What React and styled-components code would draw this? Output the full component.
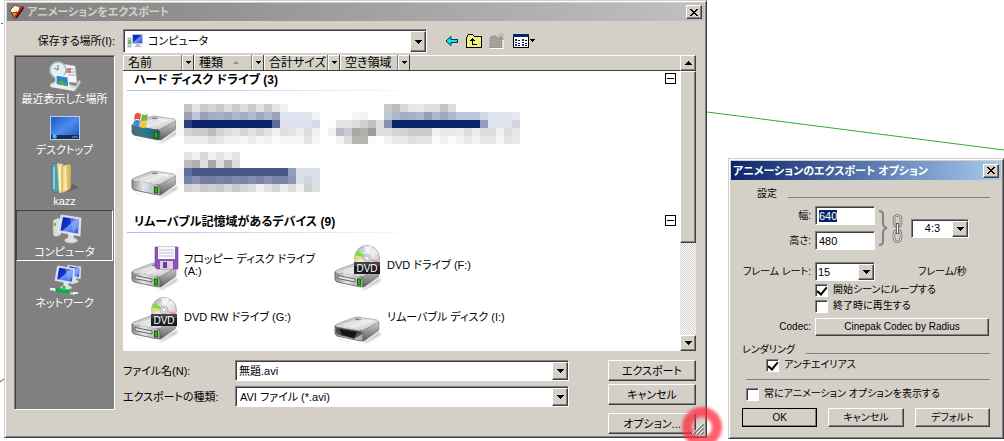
import React, { useEffect, useRef } from "react";
import styled, { createGlobalStyle, css } from "styled-components";

const GlobalStyle = createGlobalStyle`
    * {
        box-sizing: border-box;
    }
    body {
        margin: 0;
        background-color: #fff;
        overflow: hidden;
    }
    body, button, input, select {
        font-family: "Liberation Sans", "Noto Sans CJK JP", sans-serif;
        font-size: 11px;
        line-height: 14px;
        font-feature-settings: "palt";
        color: #000;
    }
    ::selection {
        background-color: #0a246a;
        color: #fff;
    }
`;

const raised = css`
    border: 1px solid;
    border-color: #fff #404040 #404040 #fff;
    box-shadow: inset -1px -1px 0 #808080;
    background-color: #d4d0c8;
`;

const sunken = css`
    border: 1px solid;
    border-color: #808080 #fff #fff #808080;
    box-shadow: inset 1px 1px 0 #404040;
    background-color: #fff;
`;

/* ---------- censored tiles ---------- */

const grey = (list) =>
    list.split(" ").map((c) => {
        if (c === "_") return null;
        return c.length === 2 ? `#${c}${c}${c}` : `#${c}`;
    });

const rep = (c, n) => Array(n).fill(c).join(" ");

const MOSAIC_C = [
    "_ c4 e4 ca d4 c8 dc cc dc ca e2 cc e4 f0",
    `_ 9a9fb2 c0c6dc 9a9fb4 a4abc4 a8afc8 9fa6c0 b0b6ca a4abc4 b4bacc a0a7be b0b8cc 9ca4bc ${rep("dfe3ef", 4)} f3f4f8`,
    `f7 2a3e80 ${rep("0a246a", 10)} 5a6c9e ${rep("dfe2ee", 4)} d6daea`,
    "f7 d2 cc cc bc d2 dc e4 d6 e2 d6 e2 f0 e0 e4 ee dc f0",
    "_ ec eb eb e0 e6 f0 f0 f5 ec f5 f0 fa f5 f5 f5 e4 f5",
];

const MOSAIC_D = [
    "_ e4 f0 d8 f0 e4 f0 e4",
    "_ bc b0 e0 a8 dc b0 dc",
    `f7 5f6e9e ${rep("465889", 12)} 92a0c0 ${rep("dce0ec", 3)}`,
    "f7 7482a8 8890ae 7480a8 707ca4 7884aa 7480a8 8088aa 7884aa 8490b0 7884aa 8890ae 7884aa 7884aa 8c96b4 dce0ea d2d6e0 dce0ea",
    "_ d0 d8 c8 d0 c8 d8 c8 d6 dc f0 e2 d4 ec dc f0 d0 e0",
];

const MOSAIC_E = [
    "_ _ _ _ _ _ _ c8 bc d8 e6 e8 e0 e0 c4 dc",
    `_ _ _ f6 f4 _ _ c2c8d0 b0b6cc a6acc4 a8aec6 b0b6ce 959cb4 b0b8d0 a0a8be b0b6cc ${rep("c0c6dc", 3)} d4d8e6 ${rep("dfe3ee", 3)} e6e8f0`,
    `fc e6e4e6 e6e4e6 dc ccd0d0 c0 de 8490b6 ${rep("0a246a", 11)} 929cc0 ${rep("dfe3ee", 3)} d2d5e4`,
    "f0 bcbcc8 c8cad6 a6aca4 b0 9c e0 e0 d4 d2 ca cc ca f0 e8 e8 ec dc ec dc dc f0 dc e6",
    "_ f4 dc b0b8b0 b4 fa _ f4 ea ea e0 e4 e4 fa f0 fa f4 e8 f4 e6 e6 f6 e4 ea",
];

const Mosaic = ({ rows, cols, top }) => (
    <svg width={cols * 8} height="52" shapeRendering="crispEdges" aria-hidden="true">
        {rows.map((row, y) =>
            grey(row).map(
                (fill, x) =>
                    fill && (
                        <rect key={`${x}-${y}`} x={x * 8} y={top + y * 8} width="8" height="8" fill={fill} />
                    )
            )
        )}
    </svg>
);

/* ---------- icons ---------- */

const Gradients = () => (
    <HiddenSvg aria-hidden="true">
        <defs>
            <linearGradient id="metalTop" x1="0" y1="0" x2="1" y2="1">
                <stop offset="0" stopColor="#a0a0a0" />
                <stop offset="0.5" stopColor="#ececec" />
                <stop offset="1" stopColor="#b0b0b0" />
            </linearGradient>
            <linearGradient id="metalSide" x1="0" y1="0" x2="0" y2="1">
                <stop offset="0" stopColor="#cecece" />
                <stop offset="1" stopColor="#5c5c5c" />
            </linearGradient>
            <linearGradient id="metalFront" x1="0" y1="0" x2="1" y2="0">
                <stop offset="0" stopColor="#8c8c8c" />
                <stop offset="0.4" stopColor="#e6e6ee" />
                <stop offset="1" stopColor="#a4a4a4" />
            </linearGradient>
            <linearGradient id="tealFront" x1="0" y1="0" x2="1" y2="0">
                <stop offset="0" stopColor="#4a6c80" />
                <stop offset="0.5" stopColor="#257c8c" />
                <stop offset="1" stopColor="#2b5a66" />
            </linearGradient>
            <linearGradient id="screen" x1="0" y1="0" x2="1" y2="1">
                <stop offset="0" stopColor="#0a22a8" />
                <stop offset="0.45" stopColor="#1434d0" />
                <stop offset="0.5" stopColor="#6c98f4" />
                <stop offset="1" stopColor="#2450dc" />
            </linearGradient>
            <linearGradient id="desk" x1="0" y1="0" x2="1" y2="1">
                <stop offset="0" stopColor="#1c58c8" />
                <stop offset="0.5" stopColor="#4c8cf0" />
                <stop offset="1" stopColor="#1850c0" />
            </linearGradient>
            <linearGradient id="disc" x1="0" y1="0" x2="1" y2="1">
                <stop offset="0" stopColor="#a8a8a8" />
                <stop offset="0.5" stopColor="#f0f0f0" />
                <stop offset="1" stopColor="#b4b4b4" />
            </linearGradient>
            <linearGradient id="folder" x1="0" y1="0" x2="1" y2="0">
                <stop offset="0" stopColor="#e8cc70" />
                <stop offset="0.5" stopColor="#fcf0b0" />
                <stop offset="1" stopColor="#d4ac48" />
            </linearGradient>
            <filter id="soft" x="-50%" y="-50%" width="200%" height="200%">
                <feGaussianBlur stdDeviation="1.6" />
            </filter>
            <filter id="shade" x="-20%" y="-50%" width="140%" height="200%">
                <feGaussianBlur stdDeviation="1" />
            </filter>
        </defs>
    </HiddenSvg>
);

const DriveBody = ({ y, kind }) => (
    <g transform={`translate(0 ${y})`}>
        <path d="M4 22 L28 27 L46 15 L46 18 L30 27 L6 23Z" fill="#666" opacity="0.5" filter="url(#shade)" />
        <path d="M1 9 Q1 8 3 7 L19 1 Q21 0 23 0 L43 3 Q45 4 45 6 L28 15Z" fill="url(#metalTop)" stroke="#8c8c8c" strokeWidth="0.6" />
        <path d="M28 14 L45 5 L45 12 Q45 13 44 14 L30 24 L28 24Z" fill="url(#metalSide)" stroke="#6c6c6c" strokeWidth="0.5" />
        <path
            d="M1 9 L26 13 Q29 14 29 17 L29 22 Q29 24 27 24 L3 19 Q1 18 1 16Z"
            fill={kind === "windows" ? "url(#tealFront)" : "url(#metalFront)"}
            stroke="#5c5c5c"
            strokeWidth="0.8"
        />
        <path d="M2 9 L26 13" stroke="#fff" strokeWidth="0.8" />
        <ellipse cx="24" cy="2.4" rx="3" ry="1" fill="#777" />
        <path d="M10 8 L25 3 L37 5" stroke="#fff" strokeWidth="0.8" fill="none" opacity="0.8" />
        {kind === "removable" ? (
            <g>
                <path d="M2 10 L26 14 Q28 15 28 17 L20 22 L5 18 Q2 17 2 14Z" fill="#505050" />
                <path d="M5 12 L23 15 L20 21 L8 18Z" fill="#141414" />
            </g>
        ) : (
            <rect x="23.5" y="16" width="3.2" height="6" fill="#18c400" stroke="#104c00" strokeWidth="0.8" />
        )}
        {(kind === "dvd" || kind === "floppy") && (
            <path d="M4 12.5 L21 16 L21 19 L4 15.5Z" fill="#e8e8e8" stroke="#555" strokeWidth="0.9" />
        )}
    </g>
);

const Flag = ({ x, y, s }) => (
    <g transform={`translate(${x} ${y}) scale(${s})`}>
        <path d="M2 1 Q5 -1 8 1 L7 7 Q4 5 1 7Z" fill="#e8582c" />
        <path d="M9 1 Q12 3 15 1 L14 7 Q11 9 8 7Z" fill="#74b83c" />
        <path d="M1 8 Q4 6 7 8 L6 14 Q3 12 0 14Z" fill="#3c8ce0" />
        <path d="M8 8 Q11 10 14 8 L13 14 Q10 16 7 14Z" fill="#fcc42c" />
    </g>
);

const bodyTop = { windows: 15, disk: 18, floppy: 20, dvd: 20, removable: 22 };

const DriveIcon = ({ kind }) => (
    <svg width="48" height="48" viewBox="0 0 48 48" aria-hidden="true">
        {kind === "dvd" && (
            <g>
                <circle cx="33" cy="15" r="12.5" fill="url(#disc)" stroke="#8c8c8c" strokeWidth="0.6" />
                <path d="M33 15 L21 12 L24 8Z" fill="#6ce428" />
                <path d="M33 15 L20 17 L21 13Z" fill="#f0dc54" opacity="0.8" />
                <path d="M33 15 L45 18 L44 21Z" fill="#f08cc0" />
                <path d="M33 15 L30 3 L38 3Z" fill="#fff" opacity="0.7" />
                <circle cx="33" cy="15" r="4" fill="#dcdcdc" stroke="#aaa" strokeWidth="0.7" />
                <circle cx="33" cy="15" r="1.8" fill="#fff" stroke="#999" strokeWidth="0.5" />
            </g>
        )}
        <DriveBody y={bodyTop[kind]} kind={kind} />
        {kind === "dvd" && (
            <g>
                <rect x="20" y="19" width="26" height="12" fill="#1c1c1c" />
                <rect x="20" y="19" width="26" height="4" fill="#444" />
                <text x="33" y="29" textAnchor="middle" fontSize="10" fill="#fff">
                    DVD
                </text>
            </g>
        )}
        {kind === "floppy" && (
            <g>
                <path d="M24 4 H47 V26 H26 L24 24Z" fill="#8c54b4" stroke="#6c3c94" strokeWidth="0.6" />
                <rect x="27" y="4" width="17" height="12" fill="#fafafa" />
                <path d="M28 7 H43 M28 10 H43 M28 13 H43" stroke="#b0b0c8" strokeWidth="0.8" />
                <rect x="29" y="18" width="13" height="8" fill="#d8d0e4" />
                <rect x="32" y="19" width="4" height="6" fill="#6c3c94" />
            </g>
        )}
        {kind === "windows" && <Flag x={2} y={12} s={1} />}
    </svg>
);

const Monitor = ({ x, y, s = 1 }) => (
    <g transform={`translate(${x} ${y}) scale(${s})`}>
        <path d="M10 18 L16 19 L16 23 Q20 24 20 26 Q16 29 11 28 Q5 27 7 24 L10 23Z" fill="#e0e0e0" stroke="#a0a0a0" strokeWidth="0.5" />
        <path d="M3 0 L23 3 L22 21 L0 17Z" fill="#d8dcec" stroke="#f8f8f8" strokeWidth="0.6" />
        <path d="M5 2 L21 4.5 L20 18.5 L2.5 15.5Z" fill="url(#screen)" />
        <path d="M12 3.2 L21 4.5 L20.5 12 L15 17.5Z" fill="#a0bcfc" opacity="0.5" />
    </g>
);

const PlaceIcon = ({ kind }) => (
    <svg width="34" height="32" viewBox="0 0 34 32" aria-hidden="true">
        {kind === "recent" && (
            <g>
                <path d="M2 24 L8 21 L28 26 L31 20 L33 22 L27 31 L3 27Z" fill="#d4d8dc" stroke="#9aa0a4" strokeWidth="0.6" />
                <path d="M14 4 L27 6 L29 23 L14 21Z" fill="#f4f6f8" stroke="#b8bcc0" strokeWidth="0.5" />
                <path d="M20 9 H26 M20 12 H27 M20 15 H27" stroke="#98a4b8" strokeWidth="1" />
                <rect x="18" y="8" width="5" height="5" fill="#c05858" opacity="0.7" />
                <circle cx="10" cy="10" r="8" fill="#e4eef0" stroke="#a8bcc0" strokeWidth="1.5" />
                <path d="M10 5 V10 L6 8" stroke="#607880" strokeWidth="1" fill="none" />
                <path d="M8 15 L20 17 L21 27 L8 25Z" fill="#2c84c8" stroke="#fff" strokeWidth="1.2" />
                <path d="M9 24 L13 20 L20 25 L20 26Z" fill="#54a854" />
                <path d="M2 25 L8 24 L26 28 L26 31 L3 27Z" fill="#eceeef" />
            </g>
        )}
        {kind === "desktop" && (
            <g>
                <rect x="2" y="5" width="30" height="24" fill="#b8ccec" />
                <rect x="3" y="6" width="28" height="22" fill="url(#desk)" />
                <rect x="3" y="24" width="28" height="4" fill="#1c2c50" />
                <circle cx="6.5" cy="25.5" r="2.2" fill="#58b4dc" />
                <path d="M24 26 H30" stroke="#88a4d0" strokeWidth="1" />
            </g>
        )}
        {kind === "user" && (
            <g>
                <path d="M20 30 L31 25 L24 22Z" fill="#444" opacity="0.5" />
                <path d="M4 2 L10 1 L12 28 L6 31 L4 27Z" fill="#4ca0b0" stroke="#307484" strokeWidth="0.5" />
                <path d="M9 1 L15 2 L16 30 L11 31Z" fill="#ecd888" />
                <path d="M14 4 L22 2 L22 27 L14 31Z" fill="url(#folder)" stroke="#b89848" strokeWidth="0.6" />
                <path d="M18 4 L23 3 L23 26 L19 28Z" fill="#d8b860" opacity="0.7" />
                <path d="M6 5 V27" stroke="#a4dce4" strokeWidth="1.5" />
                <path d="M12 4 V29" stroke="#fff" strokeWidth="1.2" />
            </g>
        )}
        {kind === "computer" && (
            <g>
                <path d="M5 7 L10 5 L13 6 V22 L8 24 L5 22Z" fill="#dcdcdc" stroke="#909090" strokeWidth="0.6" />
                <rect x="6" y="10" width="2" height="3" fill="#3cdc28" />
                <Monitor x={10} y={2} />
            </g>
        )}
        {kind === "network" && (
            <g>
                <Monitor x={18} y={1} s={0.65} />
                <Monitor x={7} y={2} s={0.85} />
                <path d="M2 25 L27 30" stroke="#b8c8c8" strokeWidth="2.4" />
                <path d="M8 26 L22 28" stroke="#10a848" strokeWidth="4" />
                <path d="M16 22 V27" stroke="#20c058" strokeWidth="3" />
                <path d="M2 25 H7 M25 29 H30" stroke="#e8f0f0" strokeWidth="2" />
            </g>
        )}
    </svg>
);

const CloseGlyph = () => (
    <svg width="8" height="7" viewBox="0 0 8 7" shapeRendering="crispEdges" aria-hidden="true">
        <path
            d="M0 0h2v1h1v1h2v-1h1v-1h2v1h-1v1h-1v1h-1v1h1v1h1v1h1v1h-2v-1h-1v-1h-2v1h-1v1h-2v-1h1v-1h1v-1h1v-1h-1v-1h-1v-1h-1z"
            fill="#000"
        />
    </svg>
);

const Triangle = ({ up }) => (
    <svg width="7" height="4" viewBox="0 0 7 4" shapeRendering="crispEdges" aria-hidden="true">
        <path d={up ? "M3 0h1v1h1v1h1v1h1v1h-7v-1h1v-1h1v-1h1z" : "M0 0h7v1h-1v1h-1v1h-1v1h-1v-1h-1v-1h-1v-1h-1z"} fill="#000" />
    </svg>
);

const AppIcon = () => (
    <svg width="16" height="16" viewBox="0 0 16 16" aria-hidden="true">
        <path d="M1 6 L6 1 L11 3 L10 9 L4 12Z" fill="#fff4dc" stroke="#604830" strokeWidth="1" />
        <path d="M3 9 L8 8 L8 14 L5 14Z" fill="#f09018" stroke="#402010" strokeWidth="0.8" />
        <path d="M14 3 L7 13" stroke="#200" strokeWidth="3" />
        <path d="M14 2 L6 13" stroke="#e81c14" strokeWidth="1.6" />
    </svg>
);

const SmallComputer = () => (
    <svg width="17" height="16" viewBox="0 0 17 16" aria-hidden="true">
        <rect x="1" y="5" width="3" height="9" fill="#d8d8d8" stroke="#888" strokeWidth="0.6" />
        <rect x="1.5" y="7" width="2" height="4" fill="#30c020" />
        <rect x="5" y="1" width="11" height="10" fill="#b8c4e8" />
        <rect x="6" y="2" width="9" height="8" fill="url(#screen)" />
        <path d="M9 11h4v2h2v1h-8v-1h2z" fill="#c0c0c0" />
    </svg>
);

const BackIcon = () => (
    <svg width="14" height="12" viewBox="0 0 14 12" aria-hidden="true">
        <path d="M1 6 L6 1.5 V4.5 H12.5 V7.5 H6 V10.5Z" fill="#00f0f0" stroke="#002858" strokeWidth="1" />
    </svg>
);

const UpIcon = () => (
    <svg width="16" height="14" viewBox="0 0 16 14" shapeRendering="crispEdges" aria-hidden="true">
        <path d="M0.5 13.5 V3.5 L2.5 0.5 H6.5 L8.5 2.5 H15.5 V13.5Z" fill="#f4f080" stroke="#000" />
        <path d="M5 5h1v-1h1v1h1v1h1v1h-2v3h4v1h-5v-4h-2v-1h1z" fill="#000" />
    </svg>
);

const NewFolderIcon = () => (
    <svg width="17" height="16" viewBox="0 0 17 16" aria-hidden="true">
        <path d="M1 15 V5 L3 3 H7 L8 5 H13 V15Z" fill="#a4a09c" stroke="#848080" strokeDasharray="2 1" />
        <path d="M1 15.5 H14 V7" stroke="#fff" fill="none" />
        <path d="M12 0 V8 M8 4 H16 M9 1 L15 7 M15 1 L9 7" stroke="#908c88" strokeWidth="1" strokeDasharray="1 1" />
    </svg>
);

const ViewIcon = () => (
    <svg width="24" height="15" viewBox="0 0 24 15" shapeRendering="crispEdges" aria-hidden="true">
        <rect x="0.5" y="0.5" width="15" height="13" fill="#fff" stroke="#000" />
        <rect x="0" y="0" width="16" height="3" fill="#0a246a" />
        <path d="M2 5h2v2h-2zM2 8h2v1h-2zM2 10h2v2h-2zM9 5h2v2h-2zM9 8h2v1h-2zM9 10h2v2h-2z" fill="#1c2c94" />
        <path d="M5 6h2M5 9h2M5 11h2M12 6h2M12 9h2M12 11h2" stroke="#000" />
        <path d="M17 5h5v1h-1v1h-1v1h-1v-1h-1v-1h-1z" fill="#000" />
    </svg>
);

const ChainIcon = () => (
    <svg width="11" height="29" viewBox="0 0 11 29" fill="none" aria-hidden="true">
        <rect x="2" y="1.5" width="7" height="11" rx="3.5" stroke="#707070" strokeWidth="2.6" />
        <rect x="2" y="1.5" width="7" height="11" rx="3.5" stroke="#e8e8e8" strokeWidth="1" />
        <rect x="2" y="16.5" width="7" height="11" rx="3.5" stroke="#707070" strokeWidth="2.6" />
        <rect x="2" y="16.5" width="7" height="11" rx="3.5" stroke="#e8e8e8" strokeWidth="1" />
        <path d="M5.5 9 V20" stroke="#606060" strokeWidth="3.2" />
        <path d="M5.5 10 V19" stroke="#f4f4f4" strokeWidth="1.2" />
    </svg>
);

const BraceIcon = () => (
    <svg width="9" height="36" viewBox="0 0 9 36" aria-hidden="true">
        <path
            d="M0 1 Q4 1 4 5 V13 Q4 17 8 18 Q4 19 4 23 V31 Q4 35 0 35"
            fill="none"
            stroke="#848484"
            strokeWidth="2"
        />
    </svg>
);

/* ---------- shared controls ---------- */

const Combo = ({ icon, label, options, id, flat }) => (
    <ComboFrame $flat={flat}>
        {icon}
        <ComboSelect id={id} aria-label={label} $flat={flat}>
            {options.map((o) => (
                <option key={o}>{o}</option>
            ))}
        </ComboSelect>
        <ComboArrow aria-hidden="true">
            <Triangle />
        </ComboArrow>
    </ComboFrame>
);

const Check = ({ indent, checked, children }) => (
    <CheckLabel $indent={indent}>
        <input type="checkbox" defaultChecked={checked} />
        {children}
    </CheckLabel>
);

/* ---------- export dialog ---------- */

const places = [
    { kind: "recent", name: "最近表示した場所" },
    { kind: "desktop", name: "デスクトップ" },
    { kind: "user", name: "kazz" },
    { kind: "computer", name: "コンピュータ", active: true },
    { kind: "network", name: "ネットワーク" },
];

const columns = [
    { name: "名前", width: 59 },
    { name: "種類", width: 58, sorted: true },
    { name: "合計サイズ", width: 64 },
    { name: "空き領域", width: 58 },
];

const devices = [
    { kind: "floppy", name: "フロッピー ディスク ドライブ (A:)" },
    { kind: "dvd", name: "DVD ドライブ (F:)" },
    { kind: "dvd", name: "DVD RW ドライブ (G:)" },
    { kind: "removable", name: "リムーバブル ディスク (I:)" },
];

const Group = ({ title, children }) => (
    <section>
        <GroupHeader>
            <h2>{title}</h2>
            <button aria-label="折りたたむ" />
        </GroupHeader>
        <Tiles>{children}</Tiles>
    </section>
);

const ExportDialog = () => (
    <ExportWindow>
        <TitleBar $inactive>
            <AppIcon />
            <h1>アニメーションをエクスポート</h1>
            <CloseButton aria-label="閉じる">
                <CloseGlyph />
            </CloseButton>
        </TitleBar>

        <ExportBody>
            <LookRow>
                <label htmlFor="look-in">保存する場所(I):</label>
                <Combo id="look-in" icon={<SmallComputer />} options={["コンピュータ"]} />
                <Tools>
                    <button aria-label="戻る"><BackIcon /></button>
                    <button aria-label="上へ"><UpIcon /></button>
                    <button aria-label="新しいフォルダ" disabled><NewFolderIcon /></button>
                    <button aria-label="表示"><ViewIcon /></button>
                </Tools>
            </LookRow>

            <Columns>
                <Places>
                    {places.map((p) => (
                        <Place key={p.kind} $active={p.active}>
                            <PlaceIcon kind={p.kind} />
                            {p.name}
                        </Place>
                    ))}
                </Places>

                <Main>
                    <FileList>
                        <ListContent>
                            <ListHead>
                                {columns.map((c) => (
                                    <React.Fragment key={c.name}>
                                        <HeadCell $width={c.width}>
                                            {c.name}
                                            {c.sorted && <SortMark />}
                                        </HeadCell>
                                        <HeadArrow aria-label={`${c.name} フィルタ`}>
                                            <svg width="5" height="3" shapeRendering="crispEdges">
                                                <path d="M0 0h5v1h-1v1h-1v1h-1v-1h-1v-1h-1z" />
                                            </svg>
                                        </HeadArrow>
                                    </React.Fragment>
                                ))}
                            </ListHead>
                            <Group title="ハード ディスク ドライブ (3)">
                                <Tile>
                                    <DriveIcon kind="windows" />
                                    <MosaicName><Mosaic rows={MOSAIC_C} cols={18} top={5} /></MosaicName>
                                </Tile>
                                <Tile $hidden>
                                    <Mosaic rows={MOSAIC_E} cols={24} top={5} />
                                </Tile>
                                <Tile>
                                    <DriveIcon kind="disk" />
                                    <MosaicName><Mosaic rows={MOSAIC_D} cols={18} top={1} /></MosaicName>
                                </Tile>
                            </Group>
                            <Group title="リムーバブル記憶域があるデバイス (9)">
                                {devices.map((d) => (
                                    <Tile key={d.name}>
                                        <DriveIcon kind={d.kind} />
                                        <TileName>{d.name}</TileName>
                                    </Tile>
                                ))}
                            </Group>
                        </ListContent>
                        <ScrollBar>
                            <button aria-label="上にスクロール"><Triangle up /></button>
                            <ScrollThumb />
                            <ScrollTrack />
                            <button aria-label="下にスクロール"><Triangle /></button>
                        </ScrollBar>
                    </FileList>

                    <FileForm>
                        <Fields>
                            <Field>
                                <label htmlFor="file-name">ファイル名(N):</label>
                                <ComboFrame>
                                    <ComboInput id="file-name" defaultValue="無題.avi" />
                                    <ComboArrow aria-hidden="true"><Triangle /></ComboArrow>
                                </ComboFrame>
                            </Field>
                            <Field>
                                <label htmlFor="file-type">エクスポートの種類:</label>
                                <Combo id="file-type" options={["AVI ファイル (*.avi)"]} />
                            </Field>
                        </Fields>
                        <Actions>
                            <PushButton>エクスポート</PushButton>
                            <PushButton>キャンセル</PushButton>
                            <PushButton $apart>オプション...</PushButton>
                        </Actions>
                    </FileForm>
                </Main>
            </Columns>
        </ExportBody>
        <Grip width="56" height="56" viewBox="0 0 56 56" aria-hidden="true">
            <circle cx="28" cy="28" r="15" fill="none" stroke="#ff2c40" strokeWidth="10" opacity="0.75" filter="url(#soft)" />
            <path d="M18 35 L29 24 M22 35 L29 28 M26 35 L29 32" stroke="#fff" strokeWidth="1" />
            <path d="M19 36 L30 25 M23 36 L30 29 M27 36 L30 33" stroke="#808080" strokeWidth="1.6" />
        </Grip>
    </ExportWindow>
);

/* ---------- options dialog ---------- */

const OptionsDialog = () => {
    const widthRef = useRef(null);

    useEffect(() => {
        widthRef.current.focus();
        widthRef.current.select();
    }, []);

    return (
        <OptionsWindow>
            <TitleBar>
                <h1>アニメーションのエクスポート オプション</h1>
                <CloseButton aria-label="閉じる">
                    <CloseGlyph />
                </CloseButton>
            </TitleBar>

            <OptionsBody>
                <Legend $indent>設定</Legend>
                <SizeGrid>
                    <label htmlFor="width">幅:</label>
                    <NumberInput id="width" ref={widthRef} defaultValue="640" />
                    <Ratio>
                        <BraceIcon />
                        <ChainIcon />
                        <Combo flat label="縦横比" options={["4:3"]} />
                    </Ratio>
                    <label htmlFor="height">高さ:</label>
                    <NumberInput id="height" defaultValue="480" />
                </SizeGrid>
                <RateRow>
                    <label htmlFor="rate">フレーム レート:</label>
                    <Combo flat id="rate" options={["15"]} />
                    <span>フレーム/秒</span>
                </RateRow>
                <Check indent={73} checked>開始シーンにループする</Check>
                <Check indent={73}>終了時に再生する</Check>
                <CodecRow>
                    <label htmlFor="codec">Codec:</label>
                    <PushButton id="codec">Cinepak Codec by Radius</PushButton>
                </CodecRow>

                <Legend>レンダリング</Legend>
                <Check indent={24} checked>アンチエイリアス</Check>
                <Divider />
                <Check indent={4}>常にアニメーション オプションを表示する</Check>
                <ButtonRow>
                    <PushButton $default>OK</PushButton>
                    <PushButton>キャンセル</PushButton>
                    <PushButton>デフォルト</PushButton>
                </ButtonRow>
            </OptionsBody>
        </OptionsWindow>
    );
};

const App = () => (
    <Desktop>
        <GlobalStyle />
        <Gradients />
        <Canvas aria-hidden="true">
            <line x1="707" y1="112" x2="1004" y2="150" stroke="#30b030" />
            <path d="M1 23.5 H3" stroke="#20a020" />
            <path d="M0 382 L4 379" stroke="#a02030" />
        </Canvas>
        <ExportDialog />
        <OptionsDialog />
    </Desktop>
);

const Desktop = styled.div`
    position: relative;
    min-height: 100vh;
`;

const HiddenSvg = styled.svg`
    position: absolute;
    width: 0;
    height: 0;
`;

const Canvas = styled.svg`
    position: absolute;
    inset: 0;
    width: 100%;
    height: 100%;
`;

const Window = styled.div`
    position: absolute;
    padding: 2px;
    border: 1px solid;
    border-color: #d4d0c8 #404040 #404040 #d4d0c8;
    box-shadow: inset 1px 1px 0 #fff, inset -1px -1px 0 #808080;
    background-color: #d4d0c8;
`;

const ExportWindow = styled(Window)`
    top: 0;
    left: 4px;
    right: 297px;
`;

const OptionsWindow = styled(Window)`
    top: 158px;
    right: 0;
    width: 276px;

    label,
    span,
    button,
    input,
    select,
    h2 {
        font-size: 10px;
    }
    input,
    select {
        font-size: 11px;
    }
`;

const TitleBar = styled.div`
    display: flex;
    align-items: center;
    gap: 2px;
    height: ${({ $inactive }) => ($inactive ? 18 : 19)}px;
    padding: 0 2px;
    color: ${({ $inactive }) => ($inactive ? "#d4d0c8" : "#fff")};
    background: ${({ $inactive }) =>
        $inactive
            ? "linear-gradient(to right, #808080, #c0c0c0)"
            : "linear-gradient(to right, #0a246a, #a6caf0)"};

    h1 {
        flex: 1;
        margin: 0;
        font-size: 11px;
        font-weight: bold;
        white-space: nowrap;
    }
`;

const CloseButton = styled.button`
    ${raised}
    display: flex;
    align-items: center;
    justify-content: center;
    width: 16px;
    height: 14px;
    padding: 0;
`;

const ExportBody = styled.div`
    padding: 8px 8px 1px 7px;
`;

const LookRow = styled.div`
    display: flex;
    align-items: center;
    gap: 8px;
    height: 24px;
    margin-bottom: 2px;

    > label {
        width: 101px;
        text-align: right;
    }
`;

const Tools = styled.div`
    display: flex;
    align-items: center;
    gap: 7px;
    width: 261px;
    padding-left: 10px;

    button {
        display: flex;
        padding: 0;
        border: none;
        background: none;
    }
`;

const ComboFrame = styled.div`
    ${sunken}
    position: relative;
    display: flex;
    align-items: center;
    flex: 1;
    align-self: stretch;
    min-width: 0;
    padding: 1px 1px 1px ${({ $flat }) => ($flat ? 1 : 3)}px;

    > svg {
        flex: none;
        margin-right: 3px;
    }
`;

const ComboSelect = styled.select`
    appearance: none;
    flex: 1;
    min-width: 0;
    padding: 0 ${({ $flat }) => ($flat ? 16 : 20)}px 0 1px;
    border: none;
    outline: none;
    background: none;
`;

const ComboInput = styled.input`
    flex: 1;
    min-width: 0;
    padding: 0 20px 0 0;
    border: none;
    outline: none;
    background: none;
`;

const ComboArrow = styled.span`
    ${raised}
    position: absolute;
    top: 1px;
    right: 0;
    bottom: 0;
    display: flex;
    align-items: center;
    justify-content: center;
    width: 16px;
    pointer-events: none;
`;

const Columns = styled.div`
    display: grid;
    grid-template-columns: 101px minmax(0, 1fr);
    gap: 8px;
`;

const Places = styled.nav`
    ${sunken}
    margin-bottom: 24px;
    padding: 1px;
    background-color: #808080;
`;

const Place = styled.button`
    display: flex;
    flex-direction: column;
    align-items: center;
    width: 100%;
    height: 51px;
    padding: 2px 0 0;
    border: 1px solid transparent;
    border-color: ${({ $active }) => ($active ? "#404040 #fff #fff #404040" : "transparent")};
    background: none;
    color: #fff;
    white-space: nowrap;
`;

const Main = styled.div`
    min-width: 0;
`;

const FileList = styled.div`
    display: flex;
    height: 296px;
    margin-bottom: 9px;
    background-color: #fff;
`;

const ListContent = styled.div`
    flex: 1;
    min-width: 0;
`;

const ListHead = styled.div`
    display: flex;
    height: 16px;
    border-bottom: 1px solid #404040;
    background-color: #d4d0c8;
    box-shadow: inset 0 1px 0 #fff;
`;

const HeadCell = styled.button`
    display: flex;
    align-items: center;
    gap: 10px;
    width: ${({ $width }) => $width}px;
    padding: 0 0 0 4px;
    border: none;
    border-left: 1px solid #fff;
    border-right: 1px solid #808080;
    background: none;
    font-size: 12px;
    white-space: nowrap;
`;

const HeadArrow = styled.button`
    display: flex;
    align-items: center;
    justify-content: center;
    width: 12px;
    padding: 0;
    border: none;
    border-left: 1px solid #fff;
    border-right: 1px solid #404040;
    background: none;
`;

const SortMark = styled.span`
    border: 3px solid transparent;
    border-top: none;
    border-bottom-color: #909090;
`;

const GroupHeader = styled.div`
    display: flex;
    justify-content: space-between;
    align-items: flex-start;
    height: 20px;
    margin: 0 4px 8px 4px;
    padding: 2px 0 0 7px;
    background: linear-gradient(to right, #a4c4ec, #fff 300px) left bottom / 100% 1px no-repeat;

    h2 {
        margin: 0;
        font-size: 12px;
        line-height: 14px;
        font-weight: bold;
    }
    button {
        width: 11px;
        height: 11px;
        padding: 0;
        border: 1px solid #000;
        background: linear-gradient(#000, #000) center / 7px 1px no-repeat;
    }
`;

const Tiles = styled.div`
    display: grid;
    grid-template-columns: 203px 203px;
    grid-auto-rows: 52px;
    margin: 0 0 10px 2px;
`;

const Tile = styled.div`
    display: flex;
    align-items: center;
    gap: 5px;
    padding-left: ${({ $hidden }) => ($hidden ? 0 : 6)}px;

    svg {
        flex: none;
    }
`;

const MosaicName = styled.div`
    display: flex;
    margin-left: -8px;
`;

const TileName = styled.span`
    width: 140px;
    padding-bottom: 4px;
    line-height: 12px;
    word-break: keep-all;
`;

const ScrollBar = styled.div`
    display: flex;
    flex-direction: column;
    width: 16px;

    button {
        ${raised}
        display: flex;
        align-items: center;
        justify-content: center;
        height: 16px;
        padding: 0;
    }
`;

const ScrollThumb = styled.div`
    ${raised}
    flex: 171;
`;

const ScrollTrack = styled.div`
    flex: 93;
    background: repeating-conic-gradient(#d4d0c8 0 25%, #fff 0 50%) 0 0 / 2px 2px;
`;

const FileForm = styled.form`
    display: flex;
    gap: 39px;
`;

const Fields = styled.div`
    flex: 1;
    display: flex;
    flex-direction: column;
    gap: 5px;
`;

const Field = styled.div`
    display: flex;
    align-items: center;
    height: 21px;

    > label {
        width: 112px;
        white-space: nowrap;
    }
`;

const Actions = styled.div`
    display: flex;
    flex-direction: column;
    gap: 3px;
    width: 88px;
`;

const PushButton = styled.button.attrs({ type: "button" })`
    ${raised}
    height: 21px;
    margin-top: ${({ $apart }) => ($apart ? 5 : 0)}px;
    padding: 0;
    white-space: nowrap;
    ${({ $default }) => $default && "outline: 1px solid #000; outline-offset: -1px;"}
`;

const Grip = styled.svg`
    position: absolute;
    right: -24px;
    bottom: -18px;
    pointer-events: none;
`;

const OptionsBody = styled.div`
    padding: 7px 11px 9px;
`;

const Legend = styled.h2`
    display: flex;
    align-items: center;
    gap: 11px;
    margin: 0;
    padding-left: ${({ $indent }) => ($indent ? 15 : 0)}px;
    line-height: 14px;
    font-weight: normal;

    &::after {
        content: "";
        flex: 1;
        height: 1px;
        margin-top: 6px;
        background-color: #808080;
    }
`;

const SizeGrid = styled.div`
    display: grid;
    grid-template-columns: 69px 60px 1fr;
    grid-template-rows: 19px 19px;
    align-items: center;
    gap: 6px 4px;
    margin-top: 5px;

    > label {
        text-align: right;
    }
`;

const NumberInput = styled.input`
    ${sunken}
    width: 100%;
    height: 19px;
    padding: 0 3px;
    outline: none;
`;

const Ratio = styled.div`
    grid-row: 1 / 3;
    grid-column: 3;
    display: flex;
    align-items: center;
    gap: 4px;

    > div {
        flex: none;
        align-self: center;
        width: 58px;
        height: 19px;
        margin-left: 4px;
    }
    select {
        text-align: center;
    }
`;

const RateRow = styled.div`
    display: flex;
    align-items: center;
    gap: 4px;
    height: 19px;
    margin: 12px 0 1px;

    > label {
        width: 69px;
        text-align: right;
        white-space: nowrap;
    }
    > div {
        flex: none;
        width: 60px;
    }
    > span {
        margin-left: 39px;
    }
`;

const CheckLabel = styled.label`
    display: flex;
    align-items: center;
    gap: 5px;
    height: 16px;
    padding-left: ${({ $indent }) => $indent}px;
    white-space: nowrap;

    input {
        ${sunken}
        appearance: none;
        display: flex;
        justify-content: center;
        width: 13px;
        height: 13px;
        margin: 0;
    }
    input:checked::after {
        content: "";
        width: 4px;
        height: 8px;
        border: solid #000;
        border-width: 0 2px 2px 0;
        transform: rotate(40deg);
    }
`;

const CodecRow = styled.div`
    display: flex;
    align-items: center;
    gap: 4px;
    margin: 4px 0 7px;

    label {
        width: 69px;
        text-align: right;
    }
    button {
        flex: 1;
        height: 18px;
        margin-right: 1px;
    }
`;

const Divider = styled.hr`
    height: 1px;
    margin: 6px 0 6px 4px;
    border: none;
    background-color: #808080;
`;

const ButtonRow = styled.div`
    display: grid;
    grid-template-columns: repeat(3, 1fr);
    gap: 11px;
    margin-top: 6px;

    button {
        height: 19px;
    }
`;

export default App;
